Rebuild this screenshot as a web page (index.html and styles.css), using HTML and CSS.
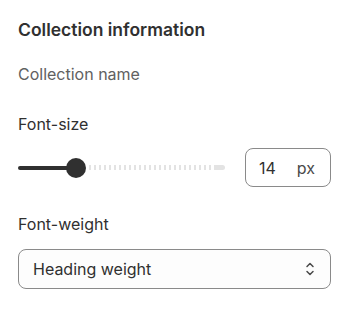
FILE: index.html
```html
<!DOCTYPE html>
<html lang="en">
<head>
  <meta charset="UTF-8" />
  <title>Collection information</title>
  <link rel="stylesheet" href="styles.css">
</head>
<body>
  <div class="panel">
    <h2 class="titulo">Collection information</h2>
    <div class="sub">Collection name</div>

    <div class="rotulo">Font-size</div>
    <div class="linha">
      <div class="slider">
        <div class="cheio"></div>
        <div class="bolinha"></div>
        <div class="vazio"></div>
        <div class="ponta"></div>
      </div>
      <div class="caixa">
        <span class="valor">14</span>
        <span class="unidade">px</span>
      </div>
    </div>

    <div class="rotulo peso">Font-weight</div>
    <div class="seletor">
      <span>Heading weight</span>
      <svg width="12" height="20" viewBox="0 0 12 20" fill="none" stroke="#4a4a4a" stroke-width="1.5" stroke-linecap="round" stroke-linejoin="round">
        <path d="M3 7.5 6 4.5 9 7.5" />
        <path d="M3 12.5 6 15.5 9 12.5" />
      </svg>
    </div>
  </div>
</body>
</html>
```

FILE: styles.css
```css
body {
  margin: 0;
  background: #fff;
  font-family: Inter, "Noto Sans", sans-serif;
  color: #303030;
}

.panel {
  padding: 19px 19px 0 18px;
}

.titulo {
  margin: 0;
  font-size: 17.5px;
  font-weight: 600;
  line-height: 22px;
}

.sub {
  margin-top: 22px;
  font-size: 16px;
  line-height: 22px;
  color: #616161;
}

.rotulo {
  margin-top: 28px;
  font-size: 16px;
  line-height: 22px;
}

.linha {
  display: flex;
  align-items: center;
  gap: 20px;
  margin-top: 13px;
}

.slider {
  flex: 1;
  display: flex;
  align-items: center;
  height: 39px;
}

.cheio {
  width: 52px;
  height: 4px;
  background: #303030;
  border-radius: 2px 0 0 2px;
  margin-right: -4px;
}

.bolinha {
  width: 20px;
  height: 20px;
  border-radius: 50%;
  background: #303030;
  flex-shrink: 0;
}

.vazio {
  flex: 1;
  height: 5px;
  margin-left: 3px;
  background: repeating-linear-gradient(to right, #e3e3e3 0 2px, transparent 2px 5px);
}

.ponta {
  width: 10px;
  height: 5px;
  border-radius: 0 3px 3px 0;
  background: #e3e3e3;
}

.caixa {
  width: 86px;
  height: 39px;
  box-sizing: border-box;
  border: 1px solid #8a8a8a;
  border-radius: 8px;
  display: flex;
  align-items: center;
  padding: 0 15px 0 13px;
  font-size: 16px;
}

.valor {
  flex: 1;
}

.unidade {
  color: #4a4a4a;
}

.peso {
  margin-top: 26px;
}

.seletor {
  margin-top: 14px;
  height: 40px;
  box-sizing: border-box;
  border: 1px solid #8a8a8a;
  border-radius: 8px;
  background: #fdfdfd;
  display: flex;
  align-items: center;
  justify-content: space-between;
  padding: 0 14px 0 14px;
  font-size: 16px;
}
```
